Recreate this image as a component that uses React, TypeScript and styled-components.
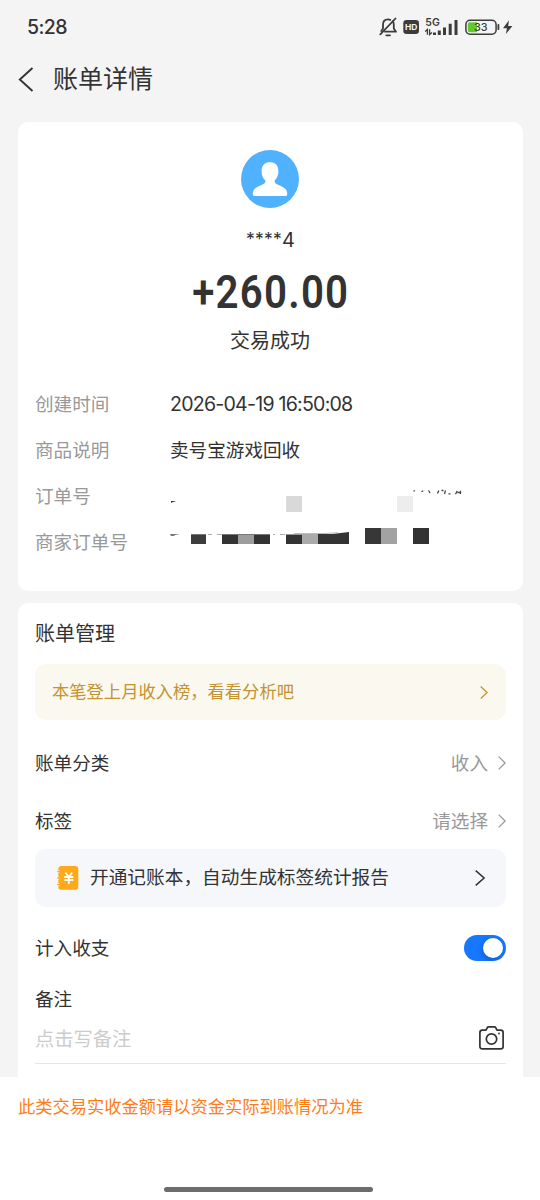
import React from 'react';
import styled, { createGlobalStyle } from 'styled-components';

const GlobalStyle = createGlobalStyle`
  * { box-sizing: border-box; }
  body {
    margin: 0;
    background: #f4f4f4;
    color: #333;
    font-family: 'Inter', 'Noto Sans CJK SC', sans-serif;
    line-height: 30px;
  }
  svg { display: block; flex: none; }
`;

const Screen = styled.div`
  display: flex;
  flex-direction: column;
  width: 540px;
  height: 1200px;
  overflow: hidden;
  background: #f4f4f4;
`;

const StatusBar = styled.div`
  display: flex;
  align-items: center;
  justify-content: space-between;
  height: 54px;
  padding: 0 26px 0 27px;
`;

const Clock = styled.span`
  font-size: 19.5px;
  font-weight: 450;
  letter-spacing: -0.6px;
`;

const StatusText = styled.text<{ $weight?: number }>`
  font-family: 'Inter', sans-serif;
  font-weight: ${(p) => p.$weight ?? 600};
`;

const Header = styled.header`
  display: flex;
  align-items: center;
  gap: 18px;
  height: 50px;
  padding-left: 18px;
`;

const Title = styled.h1`
  margin: 0;
  font-size: 25px;
  font-weight: 400;
  line-height: 36px;
`;

const Card = styled.section`
  width: 505px;
  margin: 0 0 12px 18px;
  background: #fff;
  border-radius: 10px;
`;

const SummaryCard = styled(Card)`
  display: flex;
  flex-direction: column;
  align-items: center;
  height: 469px;
  margin-top: 18px;
  padding-top: 28px;
  flex: none;
`;

const ManageCard = styled(Card)`
  height: 474px;
  margin-bottom: 0;
  padding: 0 17px;
  border-radius: 10px 10px 0 0;
  flex: none;
`;

const Name = styled.div`
  height: 28px;
  margin-top: 18px;
  font-size: 20px;
  line-height: 28px;
`;

const Mask = styled.span`
  font-size: 17.5px;
  line-height: 1;
  letter-spacing: 0.2px;
  vertical-align: 2px;
`;

const Amount = styled.div`
  margin-top: 8px;
  font-family: 'Roboto', sans-serif;
  font-size: 46px;
  font-weight: 600;
  letter-spacing: 1.4px;
  line-height: 60px;
  transform: scaleX(0.875);
`;

const Status = styled.div`
  margin-top: 4px;
  margin-right: 1px;
  font-size: 20px;
  line-height: 30px;
`;

const Details = styled.dl`
  width: 100%;
  margin: 25px 0 0;
  padding: 0 17px;
`;

const DetailRow = styled.div`
  display: flex;
  align-items: center;
  height: 46px;
  font-size: 18.6px;
`;

const Label = styled.dt`
  width: 135px;
  color: #999;
`;

const Value = styled.dd`
  margin: 0;
`;

const DateValue = styled(Value)`
  font-size: 19.6px;
  letter-spacing: -0.78px;
`;

const SectionTitle = styled.h2`
  margin: 0;
  padding-top: 2px;
  font-size: 20px;
  font-weight: 400;
  line-height: 59px;
`;

const Banner = styled.div<{ $tone: 'gold' | 'blue' }>`
  display: flex;
  align-items: center;
  justify-content: space-between;
  height: ${(p) => (p.$tone === 'gold' ? 56 : 58)}px;
  padding: ${(p) => (p.$tone === 'gold' ? '0 18px 0 17px' : '0 21px 0 22px')};
  border-radius: 11px;
  background: ${(p) => (p.$tone === 'gold' ? '#fbf8f0' : '#f5f7fb')};
  color: ${(p) => (p.$tone === 'gold' ? '#c4922f' : '#333')};
  font-size: ${(p) => (p.$tone === 'gold' ? 17.3 : 18.7)}px;
`;

const BannerText = styled.span`
  display: flex;
  align-items: center;
  gap: 11px;
`;

const SettingRow = styled.div<{ $height: number; $top?: number }>`
  display: flex;
  align-items: center;
  justify-content: space-between;
  height: ${(p) => p.$height}px;
  margin-top: ${(p) => p.$top ?? 0}px;
  font-size: 18.6px;
`;

const Choice = styled.span`
  display: flex;
  align-items: center;
  gap: 10px;
  color: #999;
`;

const Toggle = styled.span`
  display: flex;
  align-items: center;
  justify-content: flex-end;
  width: 42px;
  height: 26px;
  padding-right: 3px;
  border-radius: 13px;
  background: #1677ff;
`;

const Knob = styled.span`
  width: 20px;
  height: 20px;
  border-radius: 50%;
  background: #fff;
  box-shadow: -1px 2px 5px rgba(0, 0, 0, 0.22);
`;

const NoteInput = styled.div`
  display: flex;
  align-items: center;
  justify-content: space-between;
  height: 42px;
  padding: 0 2px 8px 0;
  border-bottom: 1px solid #e5e5e5;
  color: #ccc;
  font-size: 19.3px;
`;

const Footer = styled.footer`
  display: flex;
  flex: 1;
  flex-direction: column;
  align-items: center;
  justify-content: space-between;
  padding: 15px 18px 8px;
  background: #fff;
`;

const Notice = styled.p`
  align-self: flex-start;
  margin: 0;
  color: #ff7d18;
  font-size: 17.25px;
  line-height: 30px;
`;

const HomeBar = styled.div`
  width: 209px;
  height: 5px;
  margin-right: 4px;
  border-radius: 3px;
  background: #6b6c6b;
`;

const Chevron = ({ w, h, color, stroke = 1.3 }: { w: number; h: number; color: string; stroke?: number }) => (
  <svg width={w} height={h} viewBox={`0 0 ${w} ${h}`} fill="none" stroke={color} strokeWidth={stroke}>
    <path d={`M.7 .6L${w - 0.9} ${h / 2}L.7 ${h - 0.6}`} />
  </svg>
);

const StatusIcons = () => (
  <svg width="136" height="24" viewBox="378 15 136 24" fill="none" stroke="#3c3c3c">
    <g strokeWidth="1.8" strokeLinejoin="round" strokeLinecap="round">
      <path d="M385 31.700h11l-2.200-3.300v-3.600c0-1.500-.4-2.600-1-3.500M390.300 19.900c-.7-.4-1.500-.6-2.300-.6-3 0-5 2.200-5 5.500v3.600l-1.700 2.600" />
      <path d="M395.500 18.500L380.300 34.300" />
      <path d="M386.300 35.300h3.700" />
    </g>
    <rect x="403.300" y="20" width="15.700" height="14" rx="3.200" fill="#3c3c3c" stroke="none" />
    <StatusText $weight={700} x="405" y="29.900" fontSize="7.800" fill="#f4f4f4" stroke="none" textLength="12.400" lengthAdjust="spacingAndGlyphs">HD</StatusText>
    <StatusText x="425.300" y="26" fontSize="10.500" fill="#3c3c3c" stroke="none" textLength="14.500" lengthAdjust="spacingAndGlyphs">5G</StatusText>
    <path d="M425.200 31.500l2.200-2v5.300M429.600 29.200v5.300l2.300-2" strokeWidth="1.300" />
    <path d="M434.500 32.500V35M439.300 30.500V35M444.500 27.500V35M450.200 23.800V35M456 20V35" strokeWidth="3" />
    <rect x="465.900" y="20.200" width="30.200" height="14" rx="4.200" strokeWidth="1.500" />
    <path d="M469.800 22.200h7.200v10h-7.200q-2-.1-2-2v-6q0-1.900 2-2z" fill="#63c82c" stroke="none" />
    <path d="M498.400 25v4.200" strokeWidth="1.800" strokeLinecap="round" />
    <StatusText $weight={500} x="474" y="31.200" fontSize="11" fill="#3c3c3c" stroke="none" textLength="13.600" lengthAdjust="spacingAndGlyphs">33</StatusText>
    <path d="M509 20.300l-6 7.900h4l-1.200 5.900 6.600-8h-4.200z" fill="#3c3c3c" stroke="none" />
  </svg>
);

const AvatarIcon = styled.svg`
  margin-right: 1px;
`;

const Avatar = () => (
  <AvatarIcon width="58" height="58" viewBox="0 0 58 58">
    <circle cx="29" cy="29" r="29" fill="#50b1ff" />
    <path
      d="M29 12c-5.200 0-8.400 3.700-8.400 8.700 0 4.700 1.400 7.300 3.300 9.300.9 1.200.7 2.700-.6 3.500-2.700 1.600-6.600 2.900-9.200 5-1.700 1.400-2.300 3.200-2.300 5.300v.8q0 1.300 1.300 1.300h31.800q1.300 0 1.300-1.300v-.8c0-2.100-.6-3.900-2.300-5.300-2.600-2.100-6.500-3.400-9.200-5-1.300-.8-1.500-2.300-.6-3.500 1.900-2 3.300-4.600 3.300-9.300 0-5-3.200-8.700-8.400-8.700z"
      fill="#fff"
    />
  </AvatarIcon>
);

/* Pixelated cover over the order number */
const OrderMask = () => (
  <svg width="300" height="46" viewBox="170 473 300 46">
    <path d="M171 501h3l2 .4-3 .7-2 .8z" fill="#333" />
    <path d="M286 496h16v16h-16z" fill="#d9d9d9" />
    <path d="M397 496h16v16h-16z" fill="#ededed" />
    <path
      d="M413.500 491.300l1.500-.8M421.500 491.700l1.700-1M428.500 490.500l1.600 2.500M437.500 493.500l1.300-3M441.500 490.500h2M445.500 490.300l-1 3.700M448.500 493.800h2M455.500 494.300l1.700-3.300M460.500 490.700v3.300M457.500 492.500h3"
      fill="none"
      stroke="#444"
      strokeWidth="1.300"
    />
  </svg>
);

/* Pixelated cover over the merchant order number */
const MerchantMask = () => (
  <svg width="300" height="46" viewBox="170 519 300 46">
    <path d="M170 534h10l-5 1-1 1h-3zM191 534h15v1h-15zM222 534h48v1h-48z" fill="#777" />
    <path d="M208 534.500h4M217 534.500h5M273 534.500h2M280 534.500h5" stroke="#999" strokeWidth=".8" />
    <path d="M191 535h15v9h-15z" fill="#3d3d3d" />
    <path d="M222 535h16v9h-16zM254 535h16v9h-16zM286 534.500h16v9.500h-16zM318 534l14-.1 17-2V544h-31z" fill="#333" />
    <path d="M238 535h16v9h-16z" fill="#9d9d9d" />
    <path d="M302 533.500h16V544h-16z" fill="#aaa" />
    <path d="M294 533.500h30l14-.8" stroke="#bbb" strokeWidth="1" fill="none" />
    <path d="M365 528h16v16h-16z" fill="#373737" />
    <path d="M381 528h16v16h-16z" fill="#a2a2a2" />
    <path d="M413 528h16v16h-16z" fill="#333" />
  </svg>
);

const LedgerIcon = () => (
  <svg width="22" height="24" viewBox="0 0 22 24" fill="none">
    <path
      d="M4.500 0h13.500Q21.300 0 21.300 3.300v17.200Q21.300 23.700 18 23.700H4.500Q1.500 23.700 1.300 21.500v-1.300a1.500 1.500 0 0 0 0-3v-3.600a1.500 1.500 0 0 0 0-3V7a1.500 1.500 0 0 0 0-3v-.8Q1.500 0 4.500 0z"
      fill="#ffa91a"
    />
    <path d="M.2 5.500h3M.2 12h3M.2 18.600h3" stroke="#ffa91a" strokeWidth="1.300" />
    <path d="M8.300 6.500l3.500 4.300 3.500-4.300M7.300 11h9M7.300 14h9M11.800 10.500V18" stroke="#fff" strokeWidth="1.800" />
  </svg>
);

const CameraSvg = styled.svg`
  margin-bottom: 2px;
`;

const CameraIcon = () => (
  <CameraSvg width="25" height="24" viewBox="0 0 25 24" fill="none" stroke="#333" strokeWidth="1.700" strokeLinejoin="round">
    <path d="M3.300 4.200H7l1.300-2.500q.4-.8 1.300-.8h5.800q.9 0 1.300.8L18 4.200h3.700q2.400 0 2.400 2.400v13.800q0 2.400-2.400 2.400H3.300Q.9 22.800.9 20.400V6.600q0-2.400 2.400-2.400z" />
    <circle cx="12.500" cy="13" r="5.200" />
    <circle cx="20" cy="7.500" r=".9" fill="#333" stroke="none" />
  </CameraSvg>
);

export default function App() {
  return (
    <Screen>
      <GlobalStyle />
      <StatusBar>
        <Clock>5:28</Clock>
        <StatusIcons />
      </StatusBar>
      <Header>
        <svg width="17" height="26" viewBox="0 0 17 26" fill="none" stroke="#333" strokeWidth="1.900">
          <path d="M14.500 2L1.800 13.500l12.700 11.500" />
        </svg>
        <Title>账单详情</Title>
      </Header>

      <SummaryCard>
        <Avatar />
        <Name><Mask>****</Mask>4</Name>
        <Amount>+260.00</Amount>
        <Status>交易成功</Status>
        <Details>
          <DetailRow>
            <Label>创建时间</Label>
            <DateValue>2026-04-19 16:50:08</DateValue>
          </DetailRow>
          <DetailRow>
            <Label>商品说明</Label>
            <Value>卖号宝游戏回收</Value>
          </DetailRow>
          <DetailRow>
            <Label>订单号</Label>
            <Value><OrderMask /></Value>
          </DetailRow>
          <DetailRow>
            <Label>商家订单号</Label>
            <Value><MerchantMask /></Value>
          </DetailRow>
        </Details>
      </SummaryCard>

      <ManageCard>
        <SectionTitle>账单管理</SectionTitle>
        <Banner $tone="gold">
          <BannerText>本笔登上月收入榜，看看分析吧</BannerText>
          <Chevron w={8} h={13} color="#c4922f" />
        </Banner>
        <SettingRow $height={58} $top={14}>
          账单分类
          <Choice>收入<Chevron w={8} h={14} color="#999" /></Choice>
        </SettingRow>
        <SettingRow $height={57}>
          标签
          <Choice>请选择<Chevron w={8} h={14} color="#999" /></Choice>
        </SettingRow>
        <Banner $tone="blue">
          <BannerText><LedgerIcon />开通记账本，自动生成标签统计报告</BannerText>
          <Chevron w={10} h={16} color="#333" stroke={1.5} />
        </Banner>
        <SettingRow $height={56} $top={13}>
          计入收支
          <Toggle><Knob /></Toggle>
        </SettingRow>
        <SettingRow $height={46}>备注</SettingRow>
        <NoteInput>
          点击写备注
          <CameraIcon />
        </NoteInput>
      </ManageCard>

      <Footer>
        <Notice>此类交易实收金额请以资金实际到账情况为准</Notice>
        <HomeBar />
      </Footer>
    </Screen>
  );
}
